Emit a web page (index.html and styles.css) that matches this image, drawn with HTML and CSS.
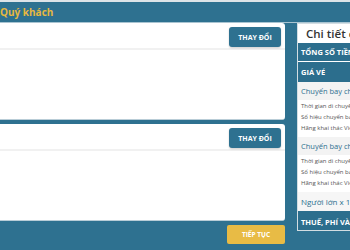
FILE: index.html
```html
<!DOCTYPE html>
<html lang="vi">

<head>
  <meta charset="UTF-8" />
  <title>Đặt vé - Quý khách</title>
  <link rel="stylesheet" href="styles.css">
</head>

<body>

  <div class="topbar">Quý khách</div>

  <div class="layout">
    <div class="main">
      <div class="card">
        <div class="card-head">
          <button class="btn-change">THAY ĐỔI</button>
        </div>
        <div class="card-body"></div>
      </div>

      <div class="card">
        <div class="card-head">
          <button class="btn-change">THAY ĐỔI</button>
        </div>
        <div class="card-body"></div>
      </div>

      <div class="actions">
        <button class="btn-next">TIẾP TỤC</button>
      </div>
    </div>

    <div class="summary">
      <div class="summary-title">Chi tiết chuyến bay</div>
      <div class="row-blue">TỔNG SỐ TIỀN</div>
      <div class="row-blue">GIÁ VÉ</div>

      <div class="flight">Chuyến bay chiều đi</div>
      <div class="details">
        <p>Thời gian di chuyển</p>
        <p>Số hiệu chuyến bay</p>
        <p>Hãng khai thác Vietnam Airlines</p>
      </div>

      <div class="flight">Chuyến bay chiều về</div>
      <div class="details">
        <p>Thời gian di chuyển</p>
        <p>Số hiệu chuyến bay</p>
        <p>Hãng khai thác Vietnam Airlines</p>
      </div>

      <div class="pax">Người lớn x 1</div>
      <div class="row-blue tall">THUẾ, PHÍ VÀ LỆ PHÍ</div>
    </div>
  </div>

</body>
</html>
```

FILE: styles.css
```css
body {
  margin: 0;
  font-family: 'Open Sans', 'Liberation Sans', sans-serif;
  background: #2e7190;
  border-top: 2px solid #dde4e8;
  overflow: hidden;
  height: 248px;
}

.topbar {
  height: 20px;
  line-height: 20px;
  color: #e6b840;
  font-size: 10px;
  font-weight: bold;
  white-space: nowrap;
  border-bottom: 1px solid #a9c4d1;
}

.layout {
  display: flex;
  gap: 12px;
}

.main {
  width: 285px;
  flex-shrink: 0;
}

.card {
  background: #fff;
  height: 97px;
  border-radius: 0 3px 3px 0;
  margin-bottom: 4px;
  border-bottom: 1px solid #b9cdd7;
  box-sizing: border-box;
}

.card-head {
  height: 27px;
  display: flex;
  justify-content: flex-end;
  align-items: flex-start;
  padding: 4px 4px 0 0;
  box-sizing: border-box;
  border-bottom: 2px solid #f1f1f1;
}

.btn-change {
  width: 52px;
  height: 20px;
  background: #2e7190;
  color: #fff;
  border: none;
  border-radius: 3px;
  font-family: inherit;
  font-size: 7px;
  font-weight: bold;
  padding: 0;
  box-shadow: 0 1px 2px rgba(0, 0, 0, 0.2);
}

.actions {
  display: flex;
  justify-content: flex-end;
}

.btn-next {
  width: 58px;
  height: 19px;
  background: #e8bb45;
  color: #fff;
  border: none;
  border-radius: 2px;
  font-family: inherit;
  font-size: 6.5px;
  font-weight: bold;
  padding: 0;
}

.summary {
  width: 120px;
  flex-shrink: 0;
  background: #fff;
  border: 1px solid #d2dde2;
  height: 208px;
  box-sizing: border-box;
  white-space: nowrap;
  overflow: hidden;
}

.summary-title {
  height: 19px;
  line-height: 19px;
  padding-left: 8px;
  font-size: 11.5px;
  font-weight: 600;
  color: #333;
}

.row-blue {
  height: 18px;
  line-height: 18px;
  background: #2c6e8d;
  color: #fff;
  font-size: 7.5px;
  font-weight: bold;
  padding-left: 3px;
  border-bottom: 1px solid #fff;
}

.row-blue + .row-blue {
  height: 20px;
  line-height: 20px;
  border-bottom: none;
}

.row-blue.tall {
  height: 23px;
  line-height: 23px;
}

.flight {
  height: 18px;
  line-height: 18px;
  background: #f3f3f3;
  color: #2e7190;
  font-size: 7.5px;
  padding-left: 3px;
}

.details {
  padding: 1px 0 3px 3px;
}

.details p {
  margin: 0;
  height: 11px;
  line-height: 11px;
  font-size: 6px;
  color: #555;
}

.pax {
  height: 19px;
  line-height: 19px;
  background: #f6f6f6;
  color: #2e7190;
  font-size: 8px;
  padding-left: 3px;
}
```
